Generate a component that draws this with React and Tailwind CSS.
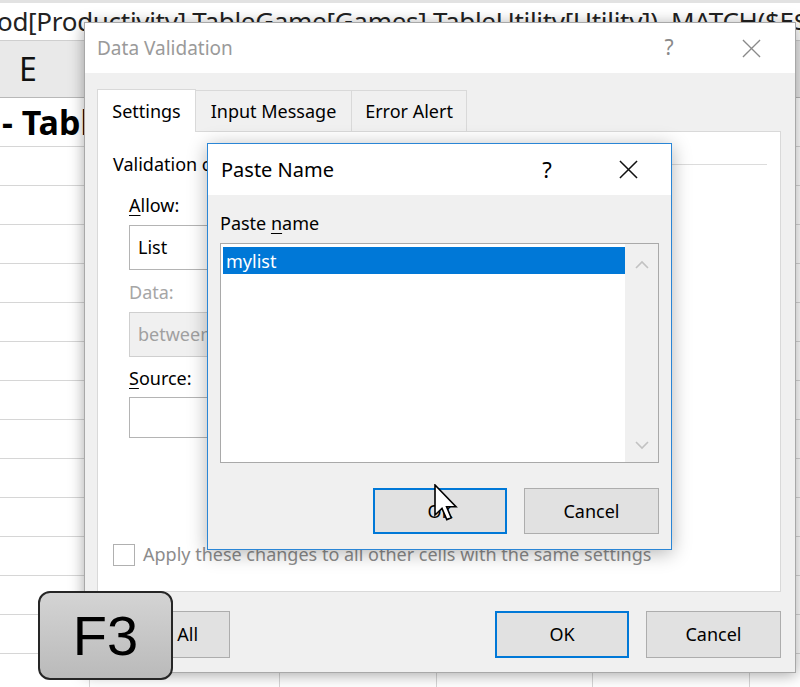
import React from "react";

function XIcon({ color = "#000", size = 20, sw = 1.6 }) {
  return (
    <svg width={size} height={size} viewBox="0 0 20 20">
      <path d="M1 1 L19 19 M19 1 L1 19" stroke={color} strokeWidth={sw} fill="none" />
    </svg>
  );
}

function Cursor() {
  return (
    <svg width="26" height="38" viewBox="0 0 13 19">
      <path
        d="M0.5 0.5 L0.5 15.5 L4 12.2 L6.4 17.8 L8.6 16.9 L6.3 11.4 L11 11.4 Z"
        fill="#fff"
        stroke="#000"
        strokeWidth="0.8"
        strokeLinejoin="miter"
      />
    </svg>
  );
}

function Chevron({ up }) {
  return (
    <svg width="14" height="9" viewBox="0 0 14 9">
      <path d={up ? "M1 8 L7 2 L13 8" : "M1 1 L7 7 L13 1"} stroke="#c2c2c2" strokeWidth="1.6" fill="none" />
    </svg>
  );
}

const cols = [90, 190, 157, 156, 157, 60];

function GridRow({ h, children }) {
  return (
    <div className="flex border-b border-[#d6d6d6] shrink-0" style={{ height: h }}>
      {cols.map((w, i) => (
        <div key={i} className="border-r border-[#d6d6d6] shrink-0 relative" style={{ width: w }}>
          {i === 0 ? children : null}
        </div>
      ))}
    </div>
  );
}

export default function App() {
  return (
    <div className="relative w-[800px] h-[687px] overflow-hidden bg-white font-['Noto_Sans',sans-serif] text-black">
      {/* Spreadsheet background */}
      <div className="flex flex-col w-[800px]">
        <div className="h-[41px] shrink-0 border-t-[3px] border-[#e2e2e2] border-b border-b-[#cfcfcf] whitespace-nowrap overflow-hidden text-[26px] leading-[36px] text-[#222] -ml-[3px] tracking-[-0.3px]">
          od[Productivity] TableGame[Games] TableUtility[Utility]), MATCH($E$5
        </div>
        <div className="h-[57px] shrink-0 bg-[#e9e9e9] border-b border-[#b8b8b8] flex items-center">
          <span className="ml-[19px] text-[32px] leading-none text-[#111]">E</span>
        </div>
        <div className="h-[49px] shrink-0 border-b border-[#d6d6d6] whitespace-nowrap overflow-visible">
          <span className="ml-[2px] text-[34px] font-bold leading-[48px]">- Table</span>
        </div>
        {Array.from({ length: 14 }).map((_, i) => (
          <GridRow key={i} h={39} />
        ))}
      </div>

      {/* Data Validation dialog */}
      <div className="absolute left-[84px] top-[22px] w-[712px] h-[651px] bg-[#f0f0f0] border border-[#a8a8a8] shadow-[0_2px_14px_rgba(0,0,0,0.35)] flex flex-col">
        <div className="h-[50px] shrink-0 bg-white flex items-center pl-[12px]">
          <span className="text-[19px] text-[#9a9a9a]">Data Validation</span>
          <span className="ml-auto w-[20px] text-center text-[21px] text-[#8a8a8a]">?</span>
          <span className="ml-[63px] mr-[34px] flex">
            <XIcon color="#8a8a8a" size={19} sw={1.4} />
          </span>
        </div>
        <div className="flex flex-col pl-[12px] pt-[15px] flex-1">
          <div className="flex items-end h-[43px] shrink-0">
            <div className="w-[99px] h-[43px] bg-white border border-b-0 border-[#d9d9d9] flex items-center justify-center text-[18px] relative z-10 -mb-px">
              Settings
            </div>
            <div className="w-[156px] h-[41px] bg-[#f0f0f0] border border-l-0 border-b-0 border-[#d9d9d9] flex items-center justify-center text-[18px]">
              Input Message
            </div>
            <div className="w-[115px] h-[41px] bg-[#f0f0f0] border border-l-0 border-b-0 border-[#d9d9d9] flex items-center justify-center text-[18px]">
              Error Alert
            </div>
          </div>
          <div className="w-[684px] h-[461px] shrink-0 bg-white border border-[#d9d9d9] flex flex-col pl-[15px] text-[18px]">
            <div className="flex items-center mt-[20px] h-[24px]">
              <span>Validation criteria</span>
              <div className="flex-1 h-px bg-[#dcdcdc] ml-2 mr-[13px]" />
            </div>
            <div className="pl-[16px] flex flex-col">
              <div className="mt-[17px] h-[24px] leading-[24px]">
                <span className="underline underline-offset-[3px]">A</span>llow:
              </div>
              <div className="mt-[8px] w-[240px] h-[45px] border border-[#b4b4b4] flex items-center pl-[8px]">List</div>
              <div className="mt-[10px] h-[24px] leading-[24px] text-[#a6a6a6]">Data:</div>
              <div className="mt-[8px] w-[240px] h-[45px] border border-[#cfcfcf] bg-[#f0f0f0] flex items-center pl-[8px] text-[#a0a0a0]">
                between
              </div>
              <div className="mt-[9px] h-[24px] leading-[24px]">
                <span className="underline underline-offset-[3px]">S</span>ource:
              </div>
              <div className="mt-[7px] w-[300px] h-[41px] border border-[#b4b4b4]" />
            </div>
            <div className="mt-auto mb-[23px] flex items-center">
              <div className="w-[22px] h-[22px] border border-[#b0b0b0] bg-white" />
              <span className="ml-[8px] text-[#8c8c8c] text-[18px]">
                Apply these changes to all other cells with the same settings
              </span>
            </div>
          </div>
          <div className="flex items-start pt-[19px] pr-[14px] text-[18px]">
            <div className="w-[133px] h-[47px] bg-[#e1e1e1] border border-[#adadad] flex items-center justify-center">
              Clear All
            </div>
            <div className="ml-auto w-[134px] h-[47px] bg-[#e1e1e1] border-2 border-[#0078d7] flex items-center justify-center">
              OK
            </div>
            <div className="ml-[17px] w-[135px] h-[47px] bg-[#e1e1e1] border border-[#adadad] flex items-center justify-center">
              Cancel
            </div>
          </div>
        </div>
      </div>

      {/* Paste Name dialog */}
      <div className="absolute left-[207px] top-[143px] w-[465px] h-[407px] bg-[#f0f0f0] border border-[#2a86d6] shadow-[0_3px_18px_rgba(0,0,0,0.3)] flex flex-col">
        <div className="h-[51px] shrink-0 bg-white flex items-center pl-[13px]">
          <span className="text-[20px]">Paste Name</span>
          <span className="ml-auto w-[20px] text-center text-[22px]">?</span>
          <span className="ml-[62px] mr-[33px] flex">
            <XIcon color="#111" size={19} sw={1.6} />
          </span>
        </div>
        <div className="flex flex-col pl-[12px] pr-[12px] flex-1 text-[18px]">
          <div className="mt-[16px] h-[24px] leading-[24px]">
            Paste <span className="underline underline-offset-[3px]">n</span>ame
          </div>
          <div className="mt-[8px] w-[439px] h-[220px] border border-[#a9a9a9] bg-white flex">
            <div className="flex-1 pt-[3px] pl-[2px]">
              <div className="h-[27px] bg-[#0078d7] text-white flex items-center pl-[3px] leading-none">mylist</div>
            </div>
            <div className="w-[33px] bg-[#f0f0f0] flex flex-col items-center justify-between pt-[16px] pb-[12px]">
              <Chevron up />
              <Chevron />
            </div>
          </div>
          <div className="flex justify-end mt-[25px]">
            <div className="w-[134px] h-[46px] bg-[#e1e1e1] border-2 border-[#0078d7] flex items-center justify-center">
              OK
            </div>
            <div className="ml-[17px] w-[135px] h-[46px] bg-[#e1e1e1] border border-[#adadad] flex items-center justify-center">
              Cancel
            </div>
          </div>
        </div>
      </div>

      {/* Mouse cursor */}
      <div className="absolute left-[434px] top-[484px]">
        <Cursor />
      </div>

      {/* F3 key badge */}
      <div className="absolute left-[38px] top-[591px] w-[135px] h-[89px] rounded-[12px] border-2 border-[#262626] bg-gradient-to-b from-[#d4d4d4] to-[#bababa] flex items-center justify-center">
        <span className="font-['Liberation_Sans',Arial,sans-serif] text-[56px] leading-none text-black">F3</span>
      </div>
    </div>
  );
}
